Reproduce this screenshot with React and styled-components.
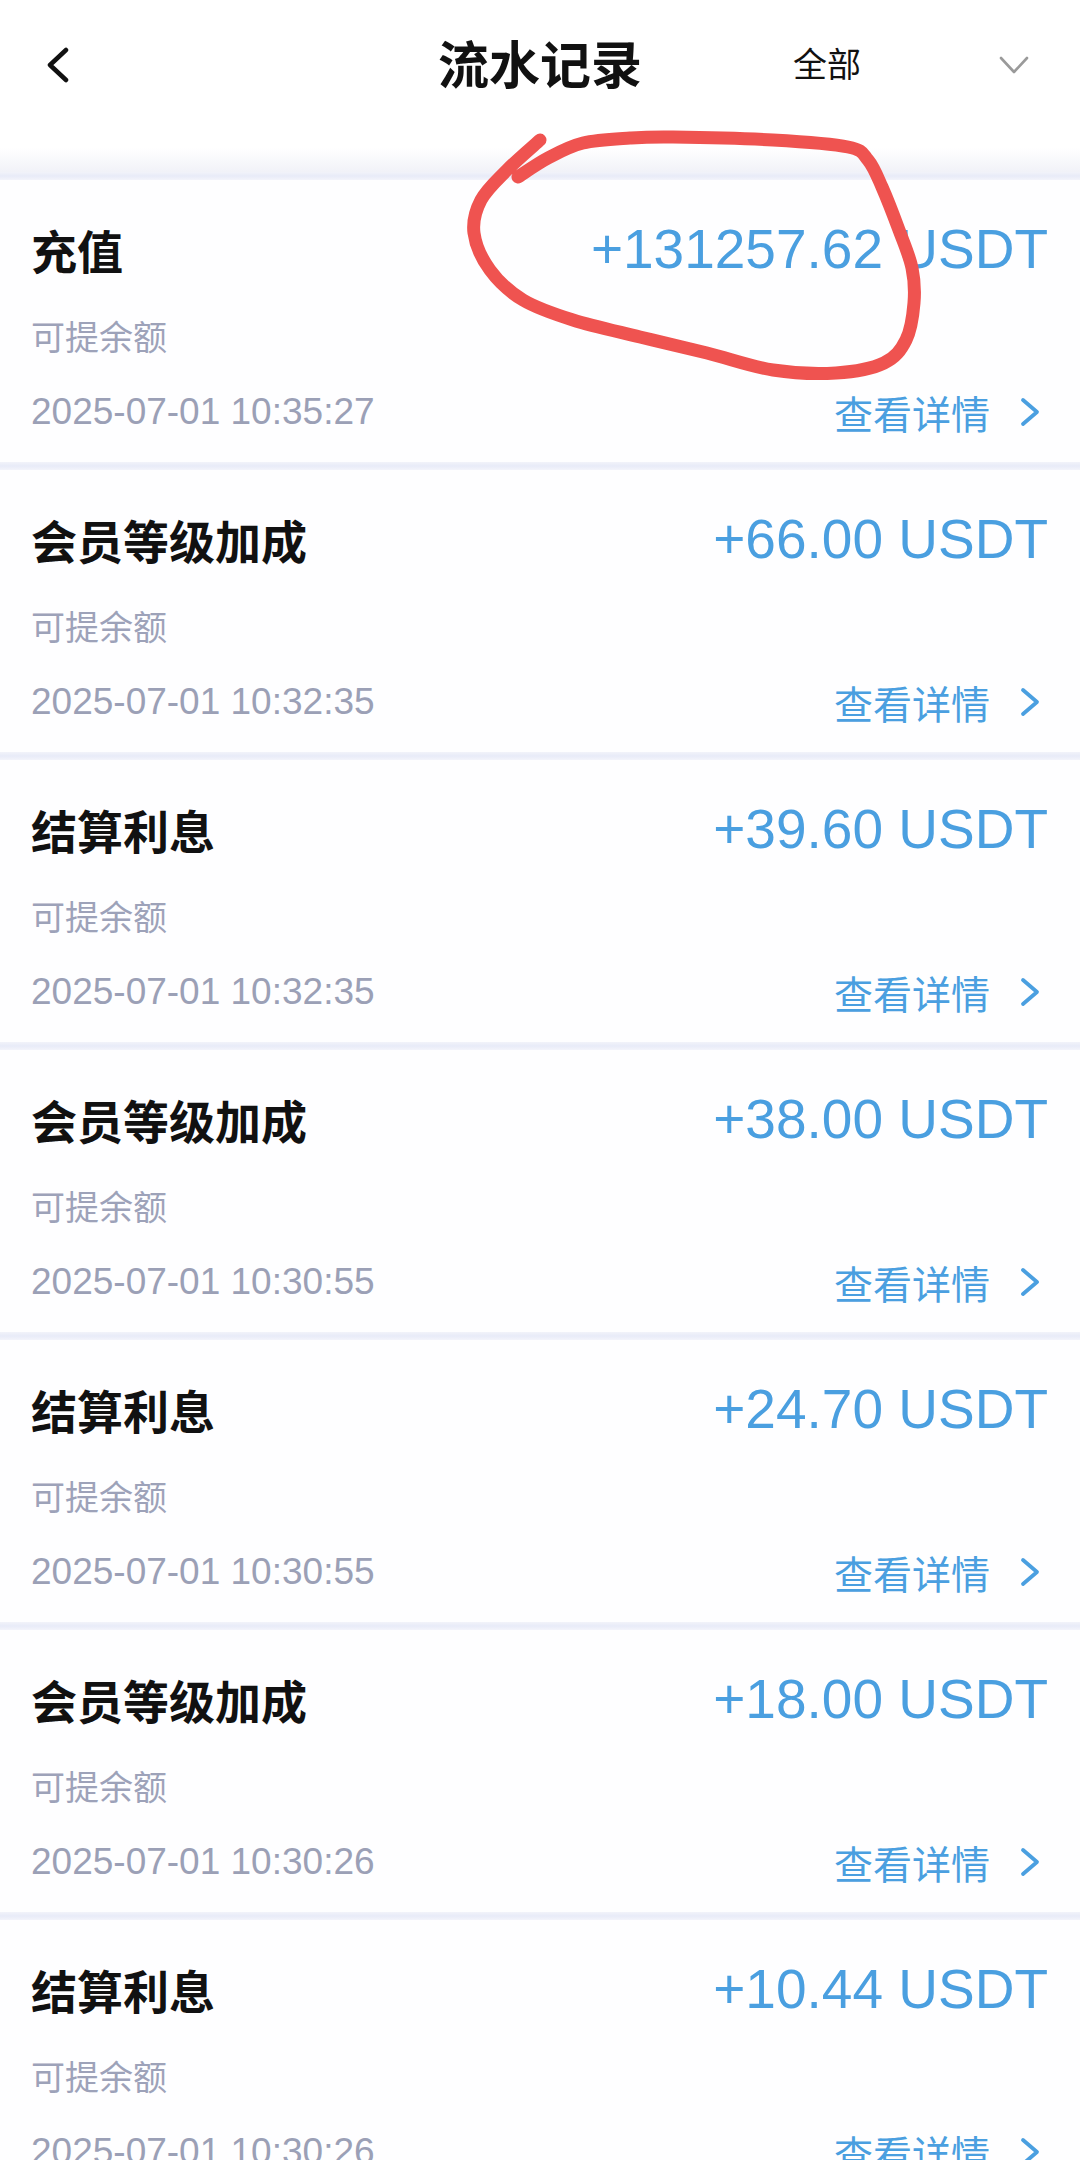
import React from "react";
import styled, { createGlobalStyle } from "styled-components";

const GlobalStyle = createGlobalStyle`
  html, body {
    margin: 0;
    padding: 0;
    overflow: hidden;
    background: #ffffff;
  }
  body {
    font-family: "Liberation Sans", "Noto Sans CJK SC", sans-serif;
    -webkit-font-smoothing: antialiased;
  }
`;

const Page = styled.div`
  position: relative;
  width: 1080px;
  background: #ffffff;
`;

const Header = styled.header`
  display: grid;
  grid-template-columns: 1fr auto 1fr;
  align-items: start;
  height: 172px;
  background: linear-gradient(to bottom, #ffffff 0px, #ffffff 148px, #f1f2f8 172px);
`;

const HeaderCell = styled.div`
  height: 130px;
  display: flex;
  align-items: center;
`;

const BackButton = styled.button`
  border: 0;
  background: transparent;
  padding: 0 0 0 46px;
  display: flex;
  align-items: center;
  cursor: pointer;
`;

const Title = styled.h1`
  margin: 0;
  height: 124px;
  line-height: 124px;
  font-family: "Noto Sans CJK SC", sans-serif;
  font-size: 51px;
  font-weight: 700;
  color: #111111;
`;

const Filter = styled.div`
  flex: 1;
  display: flex;
  align-items: center;
  justify-content: space-between;
  padding: 0 51px 0 151px;
`;

const FilterLabel = styled.span`
  margin-bottom: 5px;
  font-family: "Noto Sans CJK SC", sans-serif;
  font-size: 34px;
  color: #111111;
`;

const Separator = styled.div`
  height: 8px;
  background: linear-gradient(to bottom, #f2f3fa 0%, #e8ebf8 50%, #f3f4fb 100%);
`;

const Card = styled.article`
  display: grid;
  grid-template-columns: 1fr auto;
  grid-template-areas:
    "title amount"
    "sub ."
    "date link";
  align-items: center;
  padding: 41px 32px 25px 31px;
  background: #fefeff;
`;

const RecordTitle = styled.div`
  grid-area: title;
  font-family: "Noto Sans CJK SC", sans-serif;
  font-size: 46px;
  line-height: 56px;
  font-weight: 700;
  color: #111111;
`;

const Amount = styled.div`
  grid-area: amount;
  justify-self: end;
  font-size: 55px;
  line-height: 56px;
  color: #4a9fe0;
  white-space: nowrap;
`;

const SubLabel = styled.div`
  grid-area: sub;
  margin-top: 37px;
  font-family: "Noto Sans CJK SC", sans-serif;
  font-size: 34px;
  line-height: 44px;
  color: #9da2b9;
`;

const DateText = styled.div`
  grid-area: date;
  margin-top: 29px;
  font-size: 37px;
  line-height: 50px;
  color: #9ba0b6;
`;

const DetailLink = styled.a`
  grid-area: link;
  justify-self: end;
  margin-top: 29px;
  margin-right: 7px;
  display: flex;
  align-items: center;
  gap: 29px;
  font-family: "Noto Sans CJK SC", sans-serif;
  font-size: 39px;
  line-height: 50px;
  color: #4a9fe0;
  text-decoration: none;
`;

const Annotation = styled.svg`
  position: absolute;
  top: 0;
  left: 0;
  width: 1080px;
  height: 420px;
  pointer-events: none;
`;

const records = [
  { title: "充值", amount: "+131257.62 USDT", time: "2025-07-01 10:35:27" },
  { title: "会员等级加成", amount: "+66.00 USDT", time: "2025-07-01 10:32:35" },
  { title: "结算利息", amount: "+39.60 USDT", time: "2025-07-01 10:32:35" },
  { title: "会员等级加成", amount: "+38.00 USDT", time: "2025-07-01 10:30:55" },
  { title: "结算利息", amount: "+24.70 USDT", time: "2025-07-01 10:30:55" },
  { title: "会员等级加成", amount: "+18.00 USDT", time: "2025-07-01 10:30:26" },
  { title: "结算利息", amount: "+10.44 USDT", time: "2025-07-01 10:30:26" },
];

const loopPoints = [
  [518, 177], [548, 158], [583, 143], [630, 138], [673, 137], [773, 140],
  [848, 147], [868, 160], [882, 187], [899, 230], [912, 268], [914, 303],
  [906, 340], [884, 363], [836, 373], [773, 370], [707, 353], [640, 337],
  [573, 320], [523, 300], [490, 270], [474, 233], [481, 200], [507, 170],
  [540, 140],
];

function smoothPath(pts) {
  let d = `M ${pts[0][0]} ${pts[0][1]}`;
  for (let i = 0; i < pts.length - 1; i++) {
    const p0 = pts[i - 1] || pts[i];
    const p1 = pts[i];
    const p2 = pts[i + 1];
    const p3 = pts[i + 2] || p2;
    const c1x = p1[0] + (p2[0] - p0[0]) / 6;
    const c1y = p1[1] + (p2[1] - p0[1]) / 6;
    const c2x = p2[0] - (p3[0] - p1[0]) / 6;
    const c2y = p2[1] - (p3[1] - p1[1]) / 6;
    d += ` C ${c1x} ${c1y} ${c2x} ${c2y} ${p2[0]} ${p2[1]}`;
  }
  return d;
}

const BackIcon = () => (
  <svg width="24" height="36" viewBox="0 0 24 36">
    <polyline points="20,3 4,18 20,33" fill="none" stroke="#111" strokeWidth="4.5" strokeLinecap="round" strokeLinejoin="round" />
  </svg>
);

const DropIcon = () => (
  <svg width="30" height="18" viewBox="0 0 30 18">
    <polyline points="2,2 15,16 28,2" fill="none" stroke="#9a9a9a" strokeWidth="2.6" strokeLinecap="round" strokeLinejoin="round" />
  </svg>
);

const ArrowIcon = () => (
  <svg width="22" height="30" viewBox="0 0 22 30">
    <polyline points="4,3 18,15 4,27" fill="none" stroke="#4a9fe0" strokeWidth="3.8" strokeLinecap="round" strokeLinejoin="round" />
  </svg>
);

export default function App() {
  return (
    <Page>
      <GlobalStyle />
      <Header>
        <HeaderCell>
          <BackButton aria-label="返回">
            <BackIcon />
          </BackButton>
        </HeaderCell>
        <Title>流水记录</Title>
        <HeaderCell>
          <Filter>
            <FilterLabel>全部</FilterLabel>
            <DropIcon />
          </Filter>
        </HeaderCell>
      </Header>
      {records.map((r, i) => (
        <section key={i}>
          <Separator />
          <Card>
            <RecordTitle>{r.title}</RecordTitle>
            <Amount>{r.amount}</Amount>
            <SubLabel>可提余额</SubLabel>
            <DateText>{r.time}</DateText>
            <DetailLink href="#">
              查看详情
              <ArrowIcon />
            </DetailLink>
          </Card>
        </section>
      ))}
      <Annotation viewBox="0 0 1080 420">
        <path d={smoothPath(loopPoints)} fill="none" stroke="#ef5350" strokeWidth="13" strokeLinecap="round" strokeLinejoin="round" />
      </Annotation>
    </Page>
  );
}
